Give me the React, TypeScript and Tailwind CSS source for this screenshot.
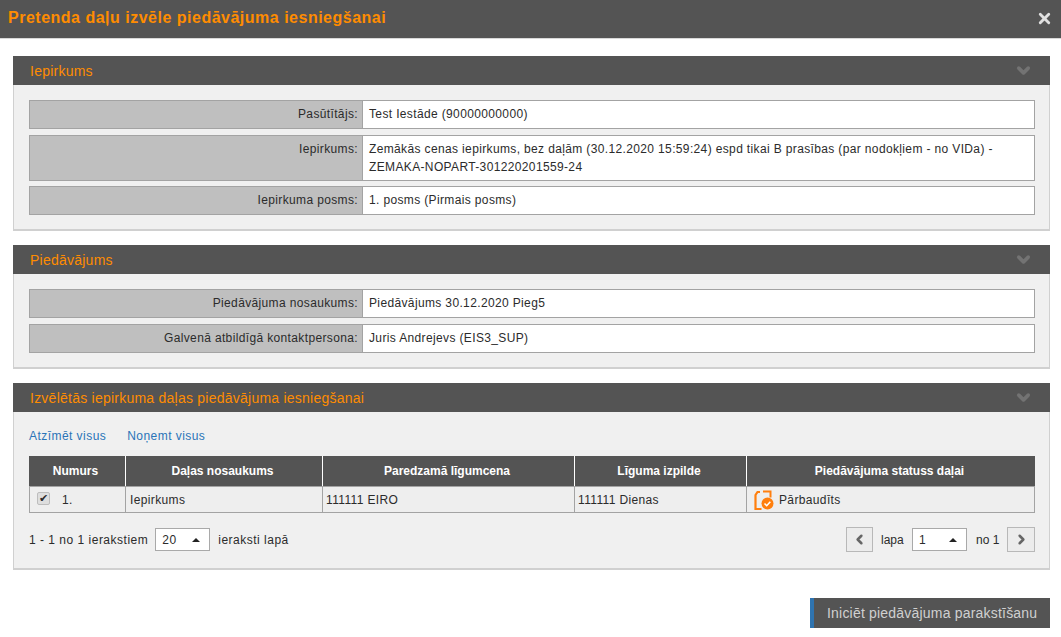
import { ChevronDown, ChevronLeft, ChevronRight, X } from "lucide-react";

function Panel({ title, children }: { title: string; children: React.ReactNode }) {
  return (
    <section className="ml-[13px] w-[1037px]">
      <div className="flex h-[29px] items-center justify-between bg-[#545454] pl-[17px] pr-[17px]">
        <span className="pt-[2px] text-[14px] font-normal tracking-[0.24px] text-[#ff8c00]">{title}</span>
        <ChevronDown size={19} strokeWidth={4.5} className="text-[#737373]" />
      </div>
      <div className="border-x border-b-2 border-[#d0d0d0] bg-[#f0f0f0]">{children}</div>
    </section>
  );
}

function InfoRow({ label, children, tall }: { label: string; children: React.ReactNode; tall?: boolean }) {
  return (
    <div className={`flex border border-[#a3a3a3] ${tall ? "h-[46px]" : "h-[29px]"}`}>
      <div className="w-[333px] shrink-0 border-r border-[#a3a3a3] bg-[#bfbfbf] pr-[4px] pt-[4px] text-right leading-[18px]">
        {label}
      </div>
      <div className="flex-1 bg-white pl-[6px] pt-[4px] leading-[18px]">{children}</div>
    </div>
  );
}

function Spinner({ value }: { value: string }) {
  return (
    <div className="flex h-[23px] w-[55px] items-center justify-between border border-[#a9a9a9] bg-white pl-[6px] pr-[9px]">
      <span>{value}</span>
      <span className="h-0 w-0 border-x-[4px] border-b-[4px] border-x-transparent border-b-[#222]" />
    </div>
  );
}

const cols = ["w-[97px]", "w-[197px]", "w-[252px]", "w-[172px]", "flex-1"];
const heads = ["Numurs", "Daļas nosaukums", "Paredzamā līgumcena", "Līguma izpilde", "Piedāvājuma statuss daļai"];

export default function App() {
  return (
    <div className="h-[637px] w-[1061px] overflow-hidden bg-white font-['Liberation_Sans',Arial,sans-serif] text-[12px] tracking-[0.36px] text-[#2b2b2b]">
      <header className="flex h-[39px] items-center justify-between border-b border-[#d8d8d8] bg-[#545454] pb-[2px] pl-[8px] pr-[8px]">
        <h1 className="text-[16px] font-bold tracking-[0.5px] text-[#ff8c00]">Pretenda daļu izvēle piedāvājuma iesniegšanai</h1>
        <X size={17} strokeWidth={4} className="text-[#e0e0e0]" />
      </header>

      <div className="mt-[17px] flex flex-col gap-[14px]">
        <Panel title="Iepirkums">
          <div className="pb-[14px] pl-[15px] pr-[14px] pt-[15px]">
            <InfoRow label="Pasūtītājs:">Test Iestāde (90000000000)</InfoRow>
            <div className="mt-[6px]">
              <InfoRow label="Iepirkums:" tall>
                Zemākās cenas iepirkums, bez daļām (30.12.2020 15:59:24) espd tikai B prasības (par nodokļiem - no VIDa) -
                <br />
                ZEMAKA-NOPART-301220201559-24
              </InfoRow>
            </div>
            <div className="mt-[5px]">
              <InfoRow label="Iepirkuma posms:">1. posms (Pirmais posms)</InfoRow>
            </div>
          </div>
        </Panel>

        <Panel title="Piedāvājums">
          <div className="flex flex-col gap-[6px] pb-[14px] pl-[15px] pr-[14px] pt-[15px]">
            <InfoRow label="Piedāvājuma nosaukums:">Piedāvājums 30.12.2020 Pieg5</InfoRow>
            <InfoRow label="Galvenā atbildīgā kontaktpersona:">Juris Andrejevs (EIS3_SUP)</InfoRow>
          </div>
        </Panel>

        <Panel title="Izvēlētās iepirkuma daļas piedāvājuma iesniegšanai">
          <div className="pb-[16px] pl-[15px] pr-[14px] pt-[16px]">
            <div className="flex gap-[21px] leading-[16px] tracking-[0.45px] text-[#2a74b8]">
              <a>Atzīmēt visus</a>
              <a>Noņemt visus</a>
            </div>

            <div className="mt-[12px] border-b border-[#a3a3a3]">
              <div className="flex h-[30px] bg-[#545454] font-bold tracking-normal text-white">
                {heads.map((h, i) => (
                  <div key={h} className={`flex items-center justify-center pr-[3px] ${cols[i]} ${i < 4 ? "border-r border-white" : ""}`}>
                    {h}
                  </div>
                ))}
              </div>
              <div className="flex h-[26px] border-t border-[#a3a3a3] bg-[#eeeeee]">
                <div className={`flex items-center border-x border-[#a3a3a3] pl-[7px] ${cols[0]}`}>
                  <span className="mb-[2px] flex h-[13px] w-[13px] items-center justify-center rounded-[2px] border border-[#bdbdbd] bg-[#dedede] text-[11px] leading-none">✔</span>
                  <span className="ml-[12px]">1.</span>
                </div>
                <div className={`flex items-center border-r border-[#a3a3a3] pl-[4px] ${cols[1]}`}>Iepirkums</div>
                <div className={`flex items-center border-r border-[#a3a3a3] pl-[3px] ${cols[2]}`}>111111 EIRO</div>
                <div className={`flex items-center border-r border-[#a3a3a3] pl-[3px] ${cols[3]}`}>111111 Dienas</div>
                <div className="flex flex-1 items-center border-r border-[#a3a3a3] pl-[7px]">
                  <svg width="20" height="20" viewBox="0 0 20 20" fill="none">
                    <path d="M6 2H3.5L1.5 5v14h6" stroke="#ff7f0e" strokeWidth="2.2" />
                    <path d="M9 1.5h7.5v6" stroke="#ff7f0e" strokeWidth="2" />
                    <circle cx="13.5" cy="13.5" r="6" fill="#ff7f0e" />
                    <path d="M10.5 13.5l2.2 2.2 3.6-4" stroke="#fff" strokeWidth="1.6" />
                  </svg>
                  <span className="ml-[5px]">Pārbaudīts</span>
                </div>
              </div>
            </div>

            <div className="mt-[14px] flex items-center justify-between">
              <div className="flex items-center tracking-[0.5px]">
                <span>1 - 1 no 1 ierakstiem</span>
                <span className="ml-[7px]"><Spinner value="20" /></span>
                <span className="ml-[8px]">ieraksti lapā</span>
              </div>
              <div className="flex items-center tracking-normal">
                <button className="flex h-[25px] w-[27px] items-center justify-center border border-[#b8b8b8] bg-[#ececec] text-[#666]">
                  <ChevronLeft size={15} strokeWidth={4} />
                </button>
                <span className="ml-[8px] w-[23px] whitespace-nowrap">lapa</span>
                <span className="ml-[8px]"><Spinner value="1" /></span>
                <span className="ml-[9px] w-[23px] whitespace-nowrap">no 1</span>
                <button className="ml-[8px] flex h-[25px] w-[28px] items-center justify-center border border-[#b8b8b8] bg-[#ececec] text-[#666]">
                  <ChevronRight size={15} strokeWidth={4} />
                </button>
              </div>
            </div>
          </div>
        </Panel>
      </div>

      <div className="mr-[11px] mt-[28px] flex justify-end">
        <button className="h-[30px] w-[240px] border-l-4 border-[#2f74b0] bg-[#545454] pl-[13px] text-left text-[14px] tracking-[0.2px] text-[#d0d0d0]">
          Iniciēt piedāvājuma parakstīšanu
        </button>
      </div>
    </div>
  );
}
